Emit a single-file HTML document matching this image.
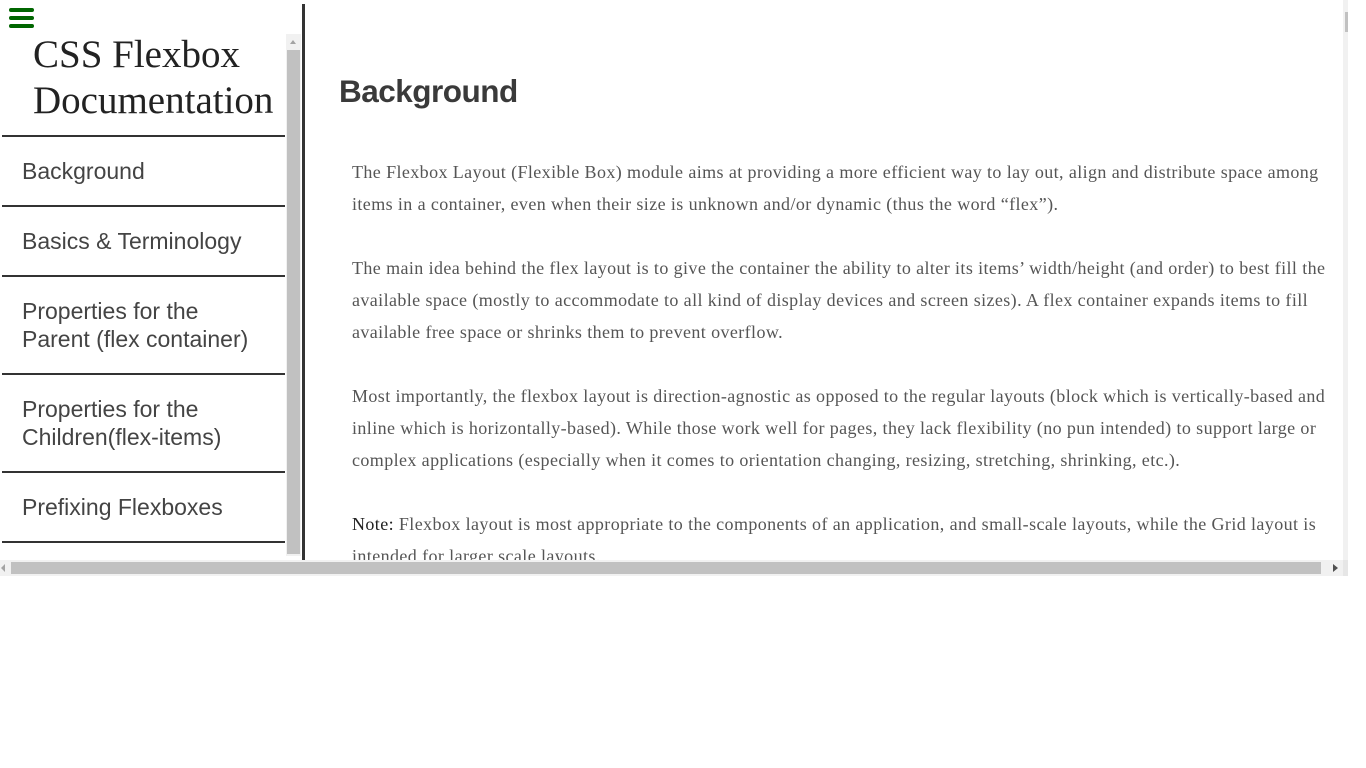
<!DOCTYPE html>
<html><head><meta charset="utf-8"><style>
*{margin:0;padding:0;box-sizing:border-box}
html,body{width:1366px;height:768px;overflow:hidden;background:#fff;position:relative}
.abs{position:absolute}
.nav{font-family:"Liberation Sans",sans-serif;font-size:23px;color:#444;}
.item{position:absolute;left:2px;width:283px;border-bottom:2px solid #333;}
.item span{position:absolute;left:20px;line-height:28px}
.p{position:absolute;left:352px;font-family:"Liberation Serif",serif;font-size:18px;letter-spacing:0.4px;color:#555;line-height:32px;white-space:nowrap}
</style></head><body>
<div class="abs" style="left:9px;top:8px;width:25px;height:4px;background:#060;border-radius:2px"></div>
<div class="abs" style="left:9px;top:16px;width:25px;height:4px;background:#060;border-radius:2px"></div>
<div class="abs" style="left:9px;top:24px;width:25px;height:4px;background:#060;border-radius:2px"></div>
<div class="abs" style="left:33px;top:32px;font-family:'Liberation Serif',serif;font-size:39px;line-height:46px;color:#222">CSS Flexbox<br>Documentation</div>
<div class="nav">
<div class="item" style="top:135px;height:2px;border:none;background:#333"></div>
<div class="item" style="top:137px;height:70px"><span style="top:20px">Background</span></div>
<div class="item" style="top:207px;height:70px"><span style="top:20px">Basics &amp; Terminology</span></div>
<div class="item" style="top:277px;height:98px"><span style="top:20px">Properties for the<br>Parent (flex container)</span></div>
<div class="item" style="top:375px;height:98px"><span style="top:20px">Properties for the<br>Children(flex-items)</span></div>
<div class="item" style="top:473px;height:70px"><span style="top:20px">Prefixing Flexboxes</span></div>
</div>
<div class="abs" style="left:286px;top:34px;width:15px;height:522px;background:#f1f1f1"></div>
<div class="abs" style="left:287px;top:50px;width:13px;height:504px;background:#c1c1c1"></div>
<div class="abs" style="left:290px;top:40px;width:0;height:0;border-left:3.5px solid transparent;border-right:3.5px solid transparent;border-bottom:4px solid #a3a3a3"></div>
<div class="abs" style="left:302px;top:4px;width:3px;height:556px;background:#333"></div>
<div class="abs" style="left:339px;top:73px;font-family:'Liberation Sans',sans-serif;font-size:31.5px;font-weight:bold;color:#3a3a3a;letter-spacing:-0.5px">Background</div>
<div style="position:absolute;left:0;top:0;width:1343px;height:560px;overflow:hidden">
<div class="p" style="top:156px">The Flexbox Layout (Flexible Box) module aims at providing a more efficient way to lay out, align and distribute space among<br>items in a container, even when their size is unknown and/or dynamic (thus the word “flex”).</div>
<div class="p" style="top:252px">The main idea behind the flex layout is to give the container the ability to alter its items’ width/height (and order) to best fill the<br>available space (mostly to accommodate to all kind of display devices and screen sizes). A flex container expands items to fill<br>available free space or shrinks them to prevent overflow.</div>
<div class="p" style="top:380px">Most importantly, the flexbox layout is direction-agnostic as opposed to the regular layouts (block which is vertically-based and<br>inline which is horizontally-based). While those work well for pages, they lack flexibility (no pun intended) to support large or<br>complex applications (especially when it comes to orientation changing, resizing, stretching, shrinking, etc.).</div>
<div class="p" style="top:508px"><span style="color:#222">Note:</span> Flexbox layout is most appropriate to the components of an application, and small-scale layouts, while the Grid layout is<br>intended for larger scale layouts.</div>
</div>
<div class="abs" style="left:1343px;top:0;width:5px;height:560px;background:#f1f1f1"></div>
<div class="abs" style="left:1345px;top:12px;width:3px;height:20px;background:#c1c1c1"></div>
<div class="abs" style="left:0;top:560px;width:1343px;height:16px;background:#f1f1f1"></div>
<div class="abs" style="left:11px;top:562px;width:1310px;height:12px;background:#c1c1c1"></div>
<div class="abs" style="left:1343px;top:560px;width:5px;height:16px;background:#e6e6e6"></div>
<div class="abs" style="left:1333px;top:564px;width:0;height:0;border-top:4px solid transparent;border-bottom:4px solid transparent;border-left:5px solid #505050"></div>
<div class="abs" style="left:1px;top:564px;width:0;height:0;border-top:4px solid transparent;border-bottom:4px solid transparent;border-right:4px solid #a3a3a3"></div>
</body></html>
